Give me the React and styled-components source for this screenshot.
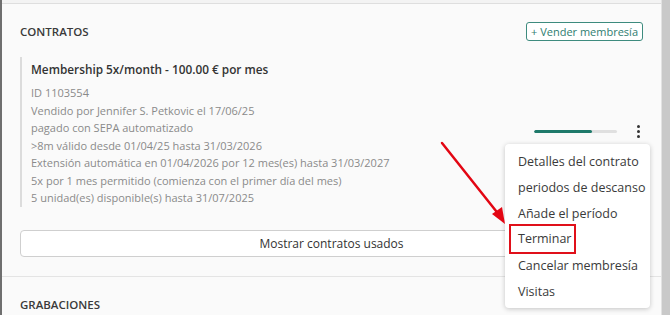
import React from "react";
import styled, { createGlobalStyle } from "styled-components";

const GlobalStyle = createGlobalStyle`
  html, body {
    margin: 0;
    padding: 0;
    background: #c9c9c9;
    font-family: "Open Sans", "Noto Sans", sans-serif;
    -webkit-font-smoothing: antialiased;
  }
`;

const infoLines = [
  "ID 1103554",
  "Vendido por Jennifer S. Petkovic el 17/06/25",
  "pagado con SEPA automatizado",
  ">8m válido desde 01/04/25 hasta 31/03/2026",
  "Extensión automática en 01/04/2026 por 12 mes(es) hasta 31/03/2027",
  "5x por 1 mes permitido (comienza con el primer día del mes)",
  "5 unidad(es) disponible(s) hasta 31/07/2025",
];

const menuItems = [
  "Detalles del contrato",
  "periodos de descanso",
  "Añade el período",
  "Terminar",
  "Cancelar membresía",
  "Visitas",
];

const Page = styled.div`
  position: relative;
  display: flex;
  width: 670px;
  height: 315px;
  overflow: hidden;
  background: #f3f3f3;
`;

const LeftEdge = styled.div`
  width: 2px;
  background: #6f6f6f;
  flex-shrink: 0;
`;

const Gutter = styled.div`
  width: 8px;
  flex-shrink: 0;
  background: #c9c9c9;
  border-left: 1px solid #e2e2e2;
`;

const Panel = styled.div`
  flex: 1;
  margin-top: 3px;
  border-top: 1px solid #dedede;
  background: #fafafa;
  display: flex;
  flex-direction: column;
`;

const Section = styled.section`
  padding: ${(p) => (p.divided ? "18px 18px 19px" : "18px 18px 18px")};
  border-bottom: ${(p) => (p.divided ? "1px solid #e4e4e4" : "none")};
`;

const Header = styled.div`
  display: flex;
  align-items: center;
  justify-content: space-between;
  height: 19px;
`;

const SectionTitle = styled.h3`
  margin: 0;
  font-size: 11.5px;
  font-weight: 600;
  color: #3a3a3a;
  text-transform: uppercase;
`;

const OutlineButton = styled.button`
  height: 19px;
  padding: 0 4px;
  border: 1px solid #3d8b7e;
  border-radius: 3px;
  background: #fff;
  color: #2f7d70;
  font-family: inherit;
  font-size: 11px;
  line-height: 17px;
  display: flex;
  align-items: center;
  gap: 3px;
`;

const Contract = styled.div`
  margin-top: 16px;
  display: flex;
  align-items: center;
`;

const Details = styled.div`
  flex: 1;
  border-left: 2px solid #dcdcdc;
  padding: 3px 0 0 9px;
`;

const ContractTitle = styled.div`
  font-size: 11.8px;
  font-weight: 600;
  color: #333;
  line-height: 18px;
  margin-bottom: 6px;
`;

const InfoLine = styled.div`
  font-size: 11px;
  line-height: 17.5px;
  color: #8a8a8a;
`;

const Actions = styled.div`
  position: relative;
  display: flex;
  align-items: center;
  gap: 18px;
  padding-right: 1px;
`;

const Progress = styled.div`
  width: 83px;
  height: 3px;
  border-radius: 2px;
  background: #e0e0e0;
  overflow: hidden;
`;

const ProgressFill = styled.div`
  height: 100%;
  background: #1f7a6b;
  border-radius: 2px;
`;

const Kebab = styled.div`
  display: flex;
  flex-direction: column;
  gap: 2px;
  padding: 0 2px;
`;

const Dot = styled.span`
  width: 3px;
  height: 3px;
  border-radius: 50%;
  background: #333;
`;

const Menu = styled.ul`
  position: absolute;
  top: 19px;
  right: -7px;
  width: 145px;
  margin: 0;
  padding: 4px 0;
  list-style: none;
  background: #fff;
  border-radius: 4px;
  box-shadow: 0 1px 5px rgba(0, 0, 0, 0.22);
  z-index: 2;
`;

const MenuItem = styled.li`
  display: flex;
  align-items: center;
  height: 26px;
  padding-left: 13px;
  font-size: 12.5px;
  color: #3a3a3a;
  white-space: nowrap;
`;

const Highlight = styled.span`
  margin: -2px 0 -2px -9px;
  padding: 5px 3px 5px 7px;
  border: 2px solid #e0101a;
  line-height: 16px;
`;

const WideButton = styled.button`
  width: 100%;
  height: 27px;
  margin-top: 23px;
  border: 1px solid #cfcfcf;
  border-radius: 4px;
  background: #fff;
  color: #333;
  font-family: inherit;
  font-size: 12px;
`;

const Arrow = styled.svg`
  position: absolute;
  left: 0;
  top: 0;
  pointer-events: none;
  z-index: 3;
`;

function App() {
  return (
    <Page>
      <GlobalStyle />
      <LeftEdge />
      <Panel>
        <Section divided>
          <Header>
            <SectionTitle>Contratos</SectionTitle>
            <OutlineButton>
              <span>+</span>
              <span>Vender membresía</span>
            </OutlineButton>
          </Header>
          <Contract>
            <Details>
              <ContractTitle>
                Membership 5x/month - 100.00 € por mes
              </ContractTitle>
              {infoLines.map((line, index) => (
                <InfoLine key={index}>{line}</InfoLine>
              ))}
            </Details>
            <Actions>
              <Progress>
                <ProgressFill style={{ width: "70%" }} />
              </Progress>
              <Kebab>
                <Dot />
                <Dot />
                <Dot />
              </Kebab>
              <Menu>
                {menuItems.map((item, index) => (
                  <MenuItem key={index}>
                    {item === "Terminar" ? <Highlight>{item}</Highlight> : item}
                  </MenuItem>
                ))}
              </Menu>
            </Actions>
          </Contract>
          <WideButton>Mostrar contratos usados</WideButton>
        </Section>
        <Section>
          <Header>
            <SectionTitle>Grabaciones</SectionTitle>
          </Header>
        </Section>
      </Panel>
      <Gutter />
      <Arrow width="670" height="315">
        <line
          x1="442"
          y1="143"
          x2="500"
          y2="216"
          stroke="#e30613"
          strokeWidth="2.5"
          strokeLinecap="round"
        />
        <polygon points="505,224 492,214 502,207" fill="#e30613" />
      </Arrow>
    </Page>
  );
}

export default App;
